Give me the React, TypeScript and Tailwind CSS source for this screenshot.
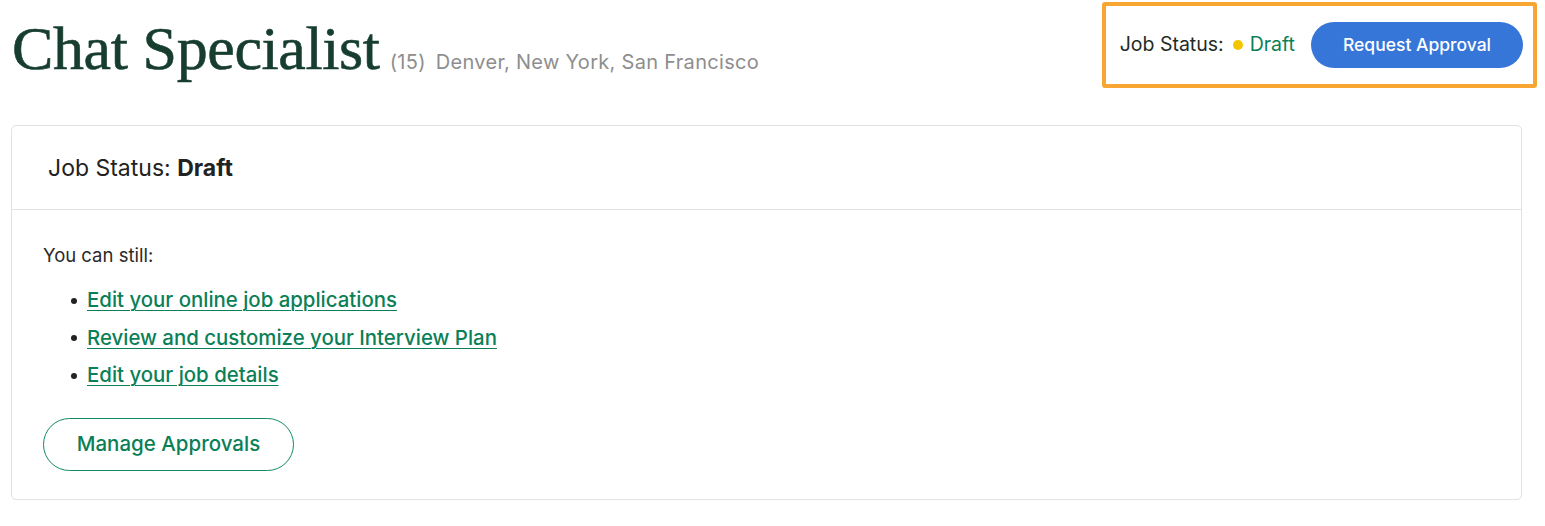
import React from "react";

const sans = { fontFamily: "Inter, 'Liberation Sans', sans-serif" };

export default function App() {
  return (
    <div className="w-[1545px] h-[526px] bg-white overflow-hidden" style={sans}>
      <div className="flex justify-between items-start">
        <div className="flex items-baseline pl-[12px] pt-[17px]">
          <h1
            className="text-[62px] leading-none text-[#173d2f] tracking-[-0.4px] [-webkit-text-stroke:0.6px_#173d2f]"
            style={{ fontFamily: "'Liberation Serif', 'DejaVu Serif', serif" }}
          >
            Chat Specialist
          </h1>
          <span className="ml-[10px] text-[20px] tracking-[0.3px] text-[#8e8e8e]">(15)</span>
          <span className="ml-[10px] text-[20px] tracking-[0.3px] text-[#8e8e8e]">
            Denver, New York, San Francisco
          </span>
        </div>
        <div className="mt-[2px] mr-[8px] border-4 border-[#f7a632] rounded-[3px] pl-[14px] pr-[10px] py-[16px] flex items-center">
          <span className="text-[19.5px] text-[#1f2b27]">Job Status:</span>
          <span className="ml-[9px] w-[10px] h-[10px] rounded-full bg-[#f2c700]"></span>
          <span className="ml-[7px] text-[19.5px] text-[#0b7f57]">Draft</span>
          <button className="ml-[16px] h-[46px] w-[212px] rounded-full bg-[#3676d8] text-white text-[17.5px] font-medium">
            Request Approval
          </button>
        </div>
      </div>

      <div className="mt-[37px] ml-[11px] mr-[23px] border border-[#e2e2e2] rounded-[5px]">
        <div className="h-[84px] flex items-center pl-[36px] pt-[2px] border-b border-[#e2e2e2] text-[23px] text-[#222]">
          <span>Job Status:&nbsp;</span>
          <span className="font-bold">Draft</span>
        </div>
        <div className="pl-[31px] pt-[31px] pb-[28px]">
          <div className="text-[18.5px] leading-[28px] text-[#2a2a2a]">You can still:</div>
          <ul className="mt-[13px] ml-[28px]">
            {[
              "Edit your online job applications",
              "Review and customize your Interview Plan",
              "Edit your job details",
            ].map((t) => (
              <li key={t} className="flex items-center h-[37.5px]">
                <span className="w-[6px] h-[6px] rounded-full bg-[#222] mr-[10px]"></span>
                <a
                  href="#"
                  className="text-[20.4px] font-medium text-[#0b7f57] underline underline-offset-[3px] decoration-1"
                >
                  {t}
                </a>
              </li>
            ))}
          </ul>
          <button className="mt-[23px] h-[53px] w-[251px] rounded-full border border-[#128a60] text-[#0b7f57] text-[20.5px] font-medium">
            Manage Approvals
          </button>
        </div>
      </div>
    </div>
  );
}
